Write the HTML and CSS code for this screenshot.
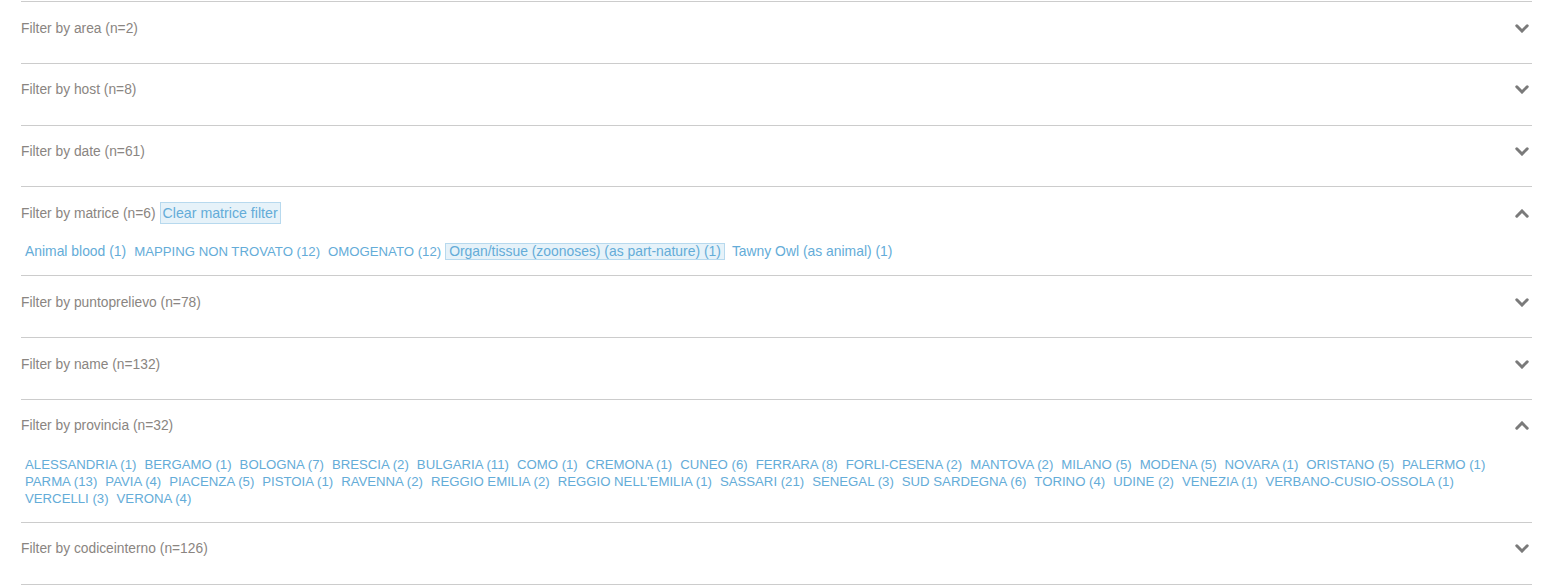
FILE: index.html
```html
<!DOCTYPE html>
<html lang="en">
<head>
<meta charset="utf-8">
<title>Filters</title>
<link rel="stylesheet" href="styles.css">
</head>
<body>
<div class="accordion">
  <section class="panel">
    <div class="head"><span class="title">Filter by area (n=2)</span><svg class="chev" width="14" height="9" viewBox="0 0 14 9"><polyline points="1.8,1.8 7,7 12.2,1.8"/></svg></div>
  </section>
  <section class="panel">
    <div class="head"><span class="title">Filter by host (n=8)</span><svg class="chev" width="14" height="9" viewBox="0 0 14 9"><polyline points="1.8,1.8 7,7 12.2,1.8"/></svg></div>
  </section>
  <section class="panel">
    <div class="head"><span class="title">Filter by date (n=61)</span><svg class="chev" width="14" height="9" viewBox="0 0 14 9"><polyline points="1.8,1.8 7,7 12.2,1.8"/></svg></div>
  </section>
  <section class="panel panel--open">
    <div class="head"><span class="title">Filter by matrice (n=6)</span><span class="clear">Clear matrice filter</span><svg class="chev" width="14" height="9" viewBox="0 0 14 9"><polyline points="1.8,7.2 7,2 12.2,7.2"/></svg></div>
    <div class="list">
      <span class="item">Animal blood (1)</span>
      <span class="item item--caps">MAPPING NON TROVATO (12)</span>
      <span class="item item--caps">OMOGENATO (12)</span>
      <span class="item item--active">Organ/tissue (zoonoses) (as part-nature) (1)</span>
      <span class="item">Tawny Owl (as animal) (1)</span>
    </div>
  </section>
  <section class="panel">
    <div class="head"><span class="title">Filter by puntoprelievo (n=78)</span><svg class="chev" width="14" height="9" viewBox="0 0 14 9"><polyline points="1.8,1.8 7,7 12.2,1.8"/></svg></div>
  </section>
  <section class="panel">
    <div class="head"><span class="title">Filter by name (n=132)</span><svg class="chev" width="14" height="9" viewBox="0 0 14 9"><polyline points="1.8,1.8 7,7 12.2,1.8"/></svg></div>
  </section>
  <section class="panel panel--open">
    <div class="head"><span class="title">Filter by provincia (n=32)</span><svg class="chev" width="14" height="9" viewBox="0 0 14 9"><polyline points="1.8,7.2 7,2 12.2,7.2"/></svg></div>
    <div class="list list--caps">
      <span class="item">ALESSANDRIA (1)</span>
      <span class="item">BERGAMO (1)</span>
      <span class="item">BOLOGNA (7)</span>
      <span class="item">BRESCIA (2)</span>
      <span class="item">BULGARIA (11)</span>
      <span class="item">COMO (1)</span>
      <span class="item">CREMONA (1)</span>
      <span class="item">CUNEO (6)</span>
      <span class="item">FERRARA (8)</span>
      <span class="item">FORLI-CESENA (2)</span>
      <span class="item">MANTOVA (2)</span>
      <span class="item">MILANO (5)</span>
      <span class="item">MODENA (5)</span>
      <span class="item">NOVARA (1)</span>
      <span class="item">ORISTANO (5)</span>
      <span class="item">PALERMO (1)</span>
      <span class="item">PARMA (13)</span>
      <span class="item">PAVIA (4)</span>
      <span class="item">PIACENZA (5)</span>
      <span class="item">PISTOIA (1)</span>
      <span class="item">RAVENNA (2)</span>
      <span class="item">REGGIO EMILIA (2)</span>
      <span class="item">REGGIO NELL'EMILIA (1)</span>
      <span class="item">SASSARI (21)</span>
      <span class="item">SENEGAL (3)</span>
      <span class="item">SUD SARDEGNA (6)</span>
      <span class="item">TORINO (4)</span>
      <span class="item">UDINE (2)</span>
      <span class="item">VENEZIA (1)</span>
      <span class="item">VERBANO-CUSIO-OSSOLA (1)</span>
      <span class="item">VERCELLI (3)</span>
      <span class="item">VERONA (4)</span>
    </div>
  </section>
  <section class="panel panel--last">
    <div class="head"><span class="title">Filter by codiceinterno (n=126)</span><svg class="chev" width="14" height="9" viewBox="0 0 14 9"><polyline points="1.8,1.8 7,7 12.2,1.8"/></svg></div>
  </section>
</div>
</body>
</html>
```

FILE: styles.css
```css
html, body {
  margin: 0;
  padding: 0;
  background: #ffffff;
}

body {
  font-family: "Liberation Sans", Arial, sans-serif;
  color: #888888;
}

.accordion {
  margin: 1px 20px 0 21px;
}

.panel {
  border-top: 1px solid #cccccc;
  height: 61.75px;
  box-sizing: border-box;
}

.panel--open {
  height: auto;
  padding-bottom: 15px;
}

.panel--last {
  border-bottom: 1px solid #cccccc;
  height: 62.75px;
}

.head {
  display: flex;
  align-items: center;
  height: 52px;
  padding-right: 3px;
}

.title {
  font-size: 13.8px;
  color: #8a8581;
}

.clear {
  margin-left: 4px;
  font-size: 14.2px;
  line-height: 20px;
  padding: 0 2px;
  color: #64acd8;
  background: #e6f2f9;
  border: 1px solid #b7d9ee;
}

.chev {
  margin-left: auto;
  display: block;
}

.chev polyline {
  fill: none;
  stroke: #7a7a7a;
  stroke-width: 3;
  stroke-linecap: round;
  stroke-linejoin: miter;
}

.list {
  display: flex;
  flex-wrap: wrap;
  padding-top: 4px;
  max-width: 1480px;
}

.item {
  font-size: 13.9px;
  line-height: 15px;
  padding: 0 3px;
  border: 1px solid transparent;
  color: #64acd8;
  white-space: nowrap;
}

.item--caps,
.list--caps .item {
  font-size: 13.2px;
}

.item--active {
  background: #e6f2f9;
  border-color: #b7d9ee;
  margin-right: 3px;
}
```
